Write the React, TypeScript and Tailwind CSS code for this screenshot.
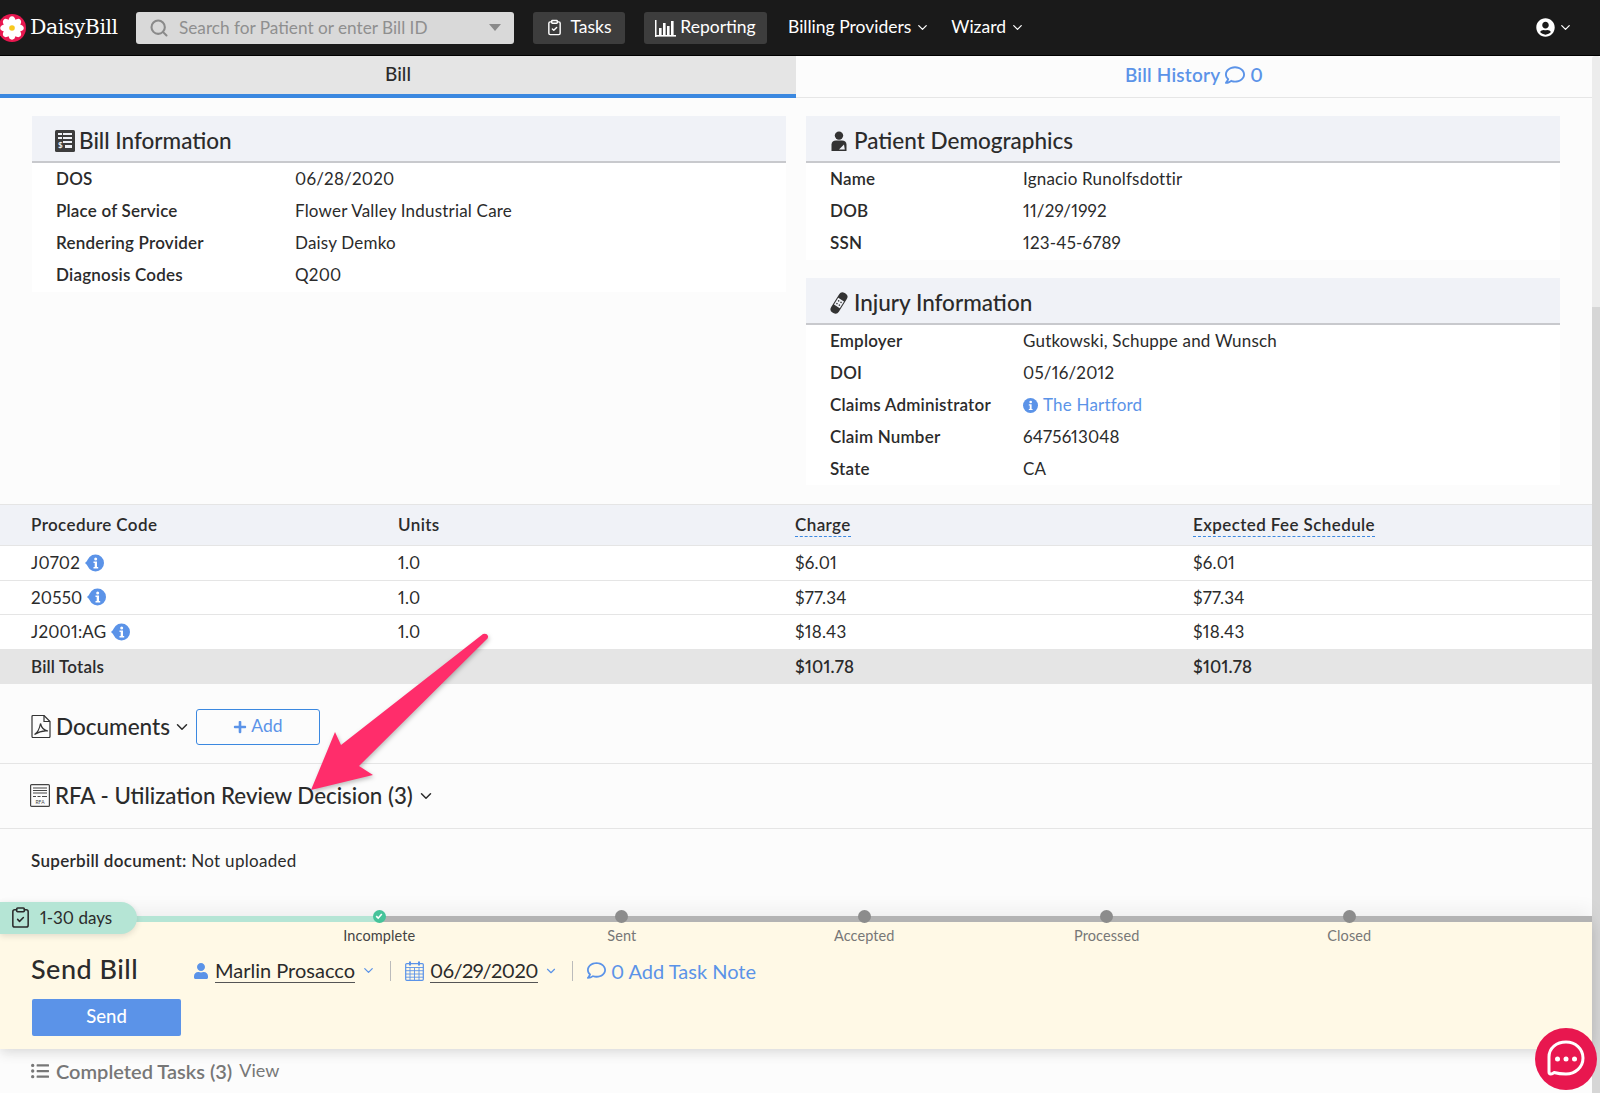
import { ChevronDown, ClipboardCheck, Search } from 'lucide-react'
import { FaListUl, FaPlus, FaRegComment, FaUser, FaUserCircle } from 'react-icons/fa'

const billInfo = [
  ['DOS', '06/28/2020'],
  ['Place of Service', 'Flower Valley Industrial Care'],
  ['Rendering Provider', 'Daisy Demko'],
  ['Diagnosis Codes', 'Q200'],
]

const patient = [
  ['Name', 'Ignacio Runolfsdottir'],
  ['DOB', '11/29/1992'],
  ['SSN', '123-45-6789'],
]

const injury = [
  ['Employer', 'Gutkowski, Schuppe and Wunsch'],
  ['DOI', '05/16/2012'],
  ['Claims Administrator', 'The Hartford'],
  ['Claim Number', '6475613048'],
  ['State', 'CA'],
]

const procedures = [
  ['J0702', '1.0', '$6.01', '$6.01'],
  ['20550', '1.0', '$77.34', '$77.34'],
  ['J2001:AG', '1.0', '$18.43', '$18.43'],
]

const steps = ['Incomplete', 'Sent', 'Accepted', 'Processed', 'Closed']

function Daisy() {
  const petals = [0, 45, 90, 135, 180, 225, 270, 315]
  return (
    <svg viewBox="0 0 28 28" className="h-[28px] w-[28px] shrink-0 -ml-[2px]">
      <circle cx="14" cy="14" r="14" fill="#e8174f" />
      {petals.map((a) => (
        <ellipse key={a} cx="14" cy="7.2" rx="3.6" ry="5" fill="#fff" transform={`rotate(${a} 14 14)`} />
      ))}
      <circle cx="14" cy="14" r="2.8" fill="#f7c81e" />
    </svg>
  )
}

function BarsIcon() {
  return (
    <svg viewBox="0 0 21 18" className="h-[18px] w-[21px]" fill="#fff">
      <rect x="0" y="1" width="1.5" height="17" />
      <rect x="0" y="16" width="21" height="1.6" />
      <rect x="4" y="9" width="2.6" height="7" />
      <rect x="8" y="4" width="2.6" height="12" />
      <rect x="12" y="7" width="2.6" height="9" />
      <rect x="16" y="2" width="2.6" height="14" />
    </svg>
  )
}

function BillIcon() {
  return (
    <svg viewBox="0 0 20 22" className="-ml-[1px] -mr-[1px] h-[22px] w-[20px] shrink-0">
      <rect width="20" height="22" rx="1.5" fill="#3d3d3d" />
      <g fill="#f0f2f7">
        <rect x="3" y="3" width="4" height="2" />
        <rect x="8" y="3" width="9" height="2" />
        <rect x="3" y="7" width="4" height="2" />
        <rect x="8" y="7" width="9" height="2" />
        <rect x="8" y="11" width="9" height="2" />
        <rect x="10" y="15" width="7" height="3" />
      </g>
      <text x="3" y="18" fontSize="8" fontWeight="700" fill="#f0f2f7" fontFamily="Lato, sans-serif">$</text>
    </svg>
  )
}

function PatientIcon() {
  return (
    <svg viewBox="0 0 16 20" className="ml-[1px] mr-[2px] h-[20px] w-[16px] shrink-0">
      <circle cx="8" cy="4.6" r="4.2" fill="#333" />
      <path d="M0.5 20V13.5C0.5 11 2.5 9.6 5 9.6H11C13.5 9.6 15.5 11 15.5 13.5V20Z" fill="#333" />
      <path d="M8 18.6L13 13.6L13.8 18.6Z" fill="#f0f2f7" />
    </svg>
  )
}

function BandageIcon() {
  return (
    <svg viewBox="0 0 18 22" className="mr-[1px] h-[22px] w-[18px] shrink-0">
      <g transform="rotate(32 9 11)">
        <rect x="4.5" y="-0.5" width="9" height="23" rx="4" fill="#333" />
        <rect x="5.6" y="7" width="6.8" height="8" fill="#f0f2f7" />
        <circle cx="7.6" cy="9.4" r="0.8" fill="#333" />
        <circle cx="10.4" cy="9.4" r="0.8" fill="#333" />
        <circle cx="7.6" cy="12.6" r="0.8" fill="#333" />
        <circle cx="10.4" cy="12.6" r="0.8" fill="#333" />
      </g>
    </svg>
  )
}

function PdfIcon() {
  return (
    <svg viewBox="0 0 20 23" className="h-[23px] w-[20px] shrink-0" fill="none" stroke="#333" strokeWidth="1.2">
      <path d="M1 1.5a1 1 0 0 1 1-1h11l6 6v15a1 1 0 0 1-1 1H2a1 1 0 0 1-1-1Z" />
      <path d="M13 .5v6h6" />
      <path d="M3.5 19.5C6 18 8.5 14 9.5 8.5C10.5 13 13 15.5 17 16C13 15.5 8 16.5 3.5 19.5Z" />
    </svg>
  )
}

function RfaIcon() {
  return (
    <svg viewBox="0 0 20 23" className="h-[23px] w-[20px] shrink-0">
      <rect x="0.6" y="0.6" width="18.8" height="21.8" rx="1" fill="none" stroke="#444" strokeWidth="1.2" />
      <path d="M3 4h14M3 6.5h14M3 9h14M3 12.5h3M7.5 12.5h3M12 12.5h5" stroke="#444" strokeWidth="1" />
      <text x="10" y="20" textAnchor="middle" fontSize="5" fill="#444" fontFamily="Lato, sans-serif">RFA</text>
    </svg>
  )
}

function InfoTag() {
  return (
    <svg viewBox="0 0 19 18" className="h-[18px] w-[19px] shrink-0">
      <path d="M0 9L7 2V16Z" fill="#5b93e8" />
      <circle cx="10.5" cy="9" r="8.5" fill="#5b93e8" />
      <circle cx="10.7" cy="5" r="1.5" fill="#fff" />
      <path d="M8.5 7.5h3.5v5.5h1.2v1.4H8.5V13h1.2V9H8.5Z" fill="#fff" />
    </svg>
  )
}

function InfoDot() {
  return (
    <svg viewBox="0 0 16 16" className="h-[15px] w-[15px] shrink-0">
      <circle cx="8" cy="8" r="8" fill="#5b93e8" />
      <circle cx="8.2" cy="4.2" r="1.4" fill="#fff" />
      <path d="M6.2 6.6h3v5h1v1.3H6.2v-1.3h1V8H6.2Z" fill="#fff" />
    </svg>
  )
}

function CalendarIcon() {
  return (
    <svg viewBox="0 0 19 20" className="h-[20px] w-[19px] shrink-0" fill="none" stroke="#5b93e8" strokeWidth="1.2">
      <rect x="0.7" y="2.6" width="17.6" height="16.7" rx="1" />
      <path d="M.7 6.5h17.6M.7 9.7h17.6M.7 13h17.6M.7 16.2h17.6M5 6.5v12.8M9.5 6.5v12.8M14 6.5v12.8" strokeWidth="0.9" />
      <path d="M5 .5v4M14 .5v4" strokeWidth="2" />
    </svg>
  )
}

function ChatIcon() {
  return (
    <svg viewBox="0 0 62 62" className="h-[62px] w-[62px]">
      <circle cx="31" cy="31" r="31" fill="#e8174f" />
      <path d="M14 44V29C14 20 21.5 14 31 14S48 21 48 30S40.5 46 31 46C26 46 22.5 45.5 19 44.5C17 46.5 14 46.5 14 44Z" fill="none" stroke="#fff" strokeWidth="3" strokeLinejoin="round" />
      <circle cx="22.5" cy="31" r="2.5" fill="#fff" />
      <circle cx="31" cy="31" r="2.5" fill="#fff" />
      <circle cx="39.5" cy="31" r="2.5" fill="#fff" />
    </svg>
  )
}

function InfoCard({ icon, title, rows, valueX, tight }: { icon: React.ReactNode; title: string; rows: string[][]; valueX: string; tight?: boolean }) {
  return (
    <div className="bg-white">
      <div className="flex h-[47px] items-center gap-[5px] border-b-2 border-[#c8c9cd] bg-[#f0f2f7] pl-[24px] pt-[4px] text-[22.5px] font-medium text-[#2b2b2b]">
        {icon}
        <span>{title}</span>
      </div>
      <div className={tight ? '' : 'pb-[1px]'}>
        {rows.map(([label, value]) => (
          <div key={label} className={`grid h-[32px] items-center pl-[24px] text-[17px] tracking-[0.2px] text-[#2b2b2b] ${valueX}`}>
            <span className="font-semibold">{label}</span>
            {value === 'The Hartford' ? (
              <span className="flex items-center gap-[5px] text-[#5b93e8]">
                <InfoDot />
                {value}
              </span>
            ) : (
              <span>{value}</span>
            )}
          </div>
        ))}
      </div>
    </div>
  )
}

export default function App() {
  return (
    <div className="relative flex h-[1093px] w-[1600px] flex-col overflow-hidden bg-[#fcfcfc] font-['Lato',sans-serif] text-[#2b2b2b] proportional-nums">
      <nav className="flex h-[56px] shrink-0 items-center border-b border-black bg-[#1a1a1a] text-[17.5px] text-white">
        <div className="flex w-[136px] items-center gap-[4px]">
          <Daisy />
          <span className="font-['DejaVu_Serif',serif] text-[20.5px] tracking-[-0.5px]">DaisyBill</span>
        </div>
        <div className="flex h-[32px] w-[378px] items-center rounded-[3px] bg-[#d9d9d9] px-[13px] text-[#8f8f8f]">
          <Search size={20} strokeWidth={2.5} className="text-[#8a8a8a]" />
          <span className="ml-[10px] flex-1 text-[17.2px]">Search for Patient or enter Bill ID</span>
          <span className="h-0 w-0 border-x-[6px] border-t-[7px] border-x-transparent border-t-[#8a8a8a]" />
        </div>
        <button className="ml-[19px] flex h-[32px] w-[92px] items-center justify-center gap-[7px] rounded-[3px] bg-[#3d3d3d]">
          <ClipboardCheck size={17} strokeWidth={2} />
          Tasks
        </button>
        <button className="ml-[19px] flex h-[32px] w-[123px] items-center justify-center gap-[4px] rounded-[3px] bg-[#3d3d3d]">
          <BarsIcon />
          Reporting
        </button>
        <span className="ml-[21px] flex items-center gap-[4px]">
          Billing Providers <ChevronDown size={15} />
        </span>
        <span className="ml-[21px] flex items-center gap-[4px]">
          Wizard <ChevronDown size={15} />
        </span>
        <span className="ml-auto mr-[27px] flex items-center gap-[3px]">
          <FaUserCircle size={19} />
          <ChevronDown size={15} />
        </span>
      </nav>

      <div className="flex min-h-0 flex-1">
        <main className="flex w-[1592px] flex-col">
          <div className="grid h-[42px] shrink-0 grid-cols-2 text-[19px]">
            <div className="flex items-center justify-center border-b-4 border-[#3b88e0] bg-[#e5e5e5] pb-[2px] font-medium">Bill</div>
            <div className="flex items-center justify-center gap-[5px] border-b border-[#e6e6e6] pb-[3px] font-semibold tracking-[0.2px] text-[#5b93e8]">
              Bill History <FaRegComment size={20} /> 0
            </div>
          </div>

          <div className="grid shrink-0 grid-cols-2 gap-[20px] px-[32px] pb-[19px] pt-[18px]">
            <div className="self-start">
              <InfoCard icon={<BillIcon />} title="Bill Information" rows={billInfo} valueX="grid-cols-[239px_1fr]" />
            </div>
            <div className="flex flex-col gap-[18px]">
              <InfoCard icon={<PatientIcon />} title="Patient Demographics" rows={patient} valueX="grid-cols-[193px_1fr]" />
              <InfoCard icon={<BandageIcon />} title="Injury Information" rows={injury} valueX="grid-cols-[193px_1fr]" tight />
            </div>
          </div>

          <div className="shrink-0 text-[17px] tracking-[0.2px]">
            <div className="grid h-[42px] grid-cols-[367px_397px_398px_1fr] items-center border-y border-[#e5e5e5] bg-[#f0f2f7] pl-[31px] font-semibold tracking-[0.4px]">
              <span>Procedure Code</span>
              <span>Units</span>
              <span><span className="border-b border-dashed border-[#3b88e0] pb-[1px]">Charge</span></span>
              <span><span className="border-b border-dashed border-[#3b88e0] pb-[1px]">Expected Fee Schedule</span></span>
            </div>
            {procedures.map((row) => (
              <div key={row[0]} className="grid h-[34.5px] grid-cols-[367px_397px_398px_1fr] items-center border-b border-[#e5e5e5] bg-white pl-[31px]">
                <span className="flex items-center gap-[5px]">
                  {row[0]} <InfoTag />
                </span>
                <span>{row[1]}</span>
                <span>{row[2]}</span>
                <span>{row[3]}</span>
              </div>
            ))}
            <div className="grid h-[34px] grid-cols-[367px_397px_398px_1fr] items-center bg-[#e5e5e5] pl-[31px] font-semibold">
              <span>Bill Totals</span>
              <span />
              <span>$101.78</span>
              <span>$101.78</span>
            </div>
          </div>

          <div className="flex h-[80px] shrink-0 items-center border-b border-[#e5e5e5] pl-[31px] pt-[7px]">
            <PdfIcon />
            <span className="ml-[5px] text-[22.5px] font-medium">Documents</span>
            <ChevronDown size={18} className="ml-[3px]" />
            <button className="ml-[5px] flex h-[36px] w-[124px] items-center justify-center gap-[4px] rounded-[3px] border border-[#3b88e0] text-[17.5px] text-[#5b93e8]">
              <FaPlus size={14} /> Add
            </button>
          </div>

          <div className="flex h-[65px] shrink-0 items-center border-b border-[#e5e5e5] pl-[30px]">
            <RfaIcon />
            <span className="ml-[5px] text-[22.3px] font-medium">RFA - Utilization Review Decision (3)</span>
            <ChevronDown size={18} className="ml-[4px]" />
          </div>

          <div className="h-[87px] shrink-0 pl-[31px] pt-[19px] text-[17px] tracking-[0.3px]">
            <span className="font-semibold">Superbill document:</span> Not uploaded
          </div>

          <section className="relative z-10 shrink-0 shadow-[0_-6px_18px_rgba(0,0,0,0.06)]">
            <div className="flex h-[6px]">
              <div className="w-[378px] bg-[#b5e5d5]" />
              <div className="flex-1 bg-[#b3b3b3]" />
            </div>
            <div className="h-[127px] bg-[#fff9e6] shadow-[0_4px_12px_rgba(0,0,0,0.12)]">
              <div className="grid grid-cols-[repeat(5,242.5px)] pl-[258px]">
                {steps.map((step, i) => (
                  <div key={step} className="-mt-[12px] flex flex-col items-center">
                    {i === 0 ? (
                      <div className="flex h-[13px] w-[13px] items-center justify-center rounded-full bg-[#46c39a]">
                        <svg viewBox="0 0 10 10" className="h-[8px] w-[8px]" fill="none" stroke="#fff" strokeWidth="2">
                          <path d="M1.5 5.2L4 7.7L8.5 2.5" />
                        </svg>
                      </div>
                    ) : (
                      <div className="h-[13px] w-[13px] rounded-full bg-[#8c8c8c]" />
                    )}
                    <span className={`mt-[4px] text-[14.5px] leading-[18px] tracking-[0.1px] ${i === 0 ? 'text-[#444]' : 'text-[#777]'}`}>{step}</span>
                  </div>
                ))}
              </div>
              <div className="mt-[6px] flex h-[40px] items-center pl-[31px]">
                <span className="w-[162px] pb-[2px] text-[27px] font-medium tracking-[0.5px]">Send Bill</span>
                <FaUser size={16} className="text-[#5b93e8]" />
                <span className="ml-[6px] border-b border-[#555] text-[20px] leading-[23px]">Marlin Prosacco</span>
                <ChevronDown size={15} className="ml-[6px] text-[#5b93e8]" />
                <span className="mx-[14px] h-[20px] w-px bg-[#bbb]" />
                <CalendarIcon />
                <span className="ml-[6px] border-b border-[#555] text-[20px] leading-[23px] tracking-[-0.5px]">06/29/2020</span>
                <ChevronDown size={14} className="ml-[6px] text-[#5b93e8]" />
                <span className="mx-[14px] h-[20px] w-px bg-[#bbb]" />
                <span className="flex items-center gap-[5px] text-[20px] text-[#5b93e8]">
                  <FaRegComment size={19} /> 0 Add Task Note
                </span>
              </div>
              <button className="ml-[32px] mt-[8px] h-[37px] w-[149px] rounded-[2px] bg-[#5b93e8] text-[18.5px] font-medium text-white">Send</button>
            </div>
            <div className="absolute -top-[14px] left-0 flex h-[32px] w-[137px] items-center gap-[8px] rounded-r-[16px] bg-[#b5e5d5] pl-[9px] text-[17px] shadow-[0_2px_6px_rgba(0,0,0,0.12)]">
              <ClipboardCheck size={23} strokeWidth={1.6} />
              1-30 days
            </div>
          </section>

          <div className="flex flex-1 items-center gap-[7px] pl-[31px] text-[#777]">
            <FaListUl size={18} />
            <span className="text-[20px] font-semibold">Completed Tasks (3)</span>
            <span className="text-[18px]">View</span>
          </div>
        </main>

        <aside className="flex w-[8px] flex-col">
          <div className="h-[251px] rounded-t-[3px] bg-[#ececec]" />
          <div className="flex-1 bg-[#d6d6d6]" />
        </aside>
      </div>

      <svg viewBox="300 625 200 175" className="absolute left-[300px] top-[625px] z-20 h-[175px] w-[200px] drop-shadow-[1px_2px_2px_rgba(0,0,0,0.25)]">
        <path d="M311 790L335 732L341 745L483 634Q487 633 488 636Q488.5 638 486 640L359 766L373 775Z" fill="#ff2d6b" />
      </svg>

      <div className="absolute left-[1535px] top-[1028px] z-20">
        <ChatIcon />
      </div>
    </div>
  )
}
